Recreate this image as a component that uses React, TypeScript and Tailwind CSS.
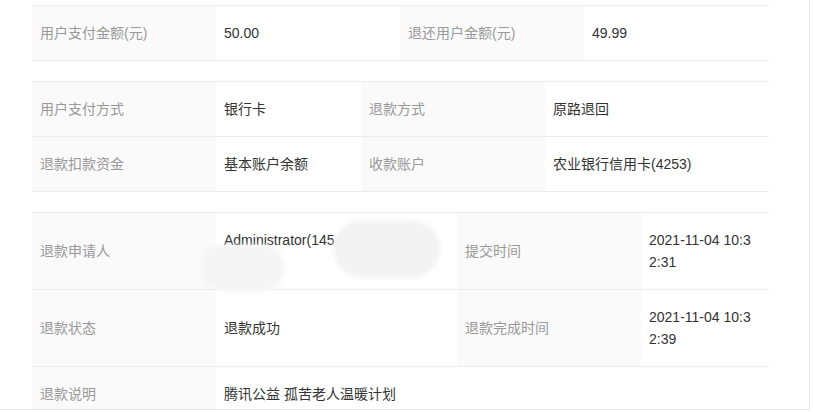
const font = { fontFamily: '"Liberation Sans", "Noto Sans CJK SC", sans-serif' };

function Label({ children }: { children: React.ReactNode }) {
  return (
    <div className="flex items-center bg-[#fafafa] px-2 text-[#999999]">
      {children}
    </div>
  );
}

function Value({ children, className = "" }: { children: React.ReactNode; className?: string }) {
  return (
    <div className={"flex items-center py-4 pl-2 pr-4 text-[#333333] break-all " + className}>
      <div>{children}</div>
    </div>
  );
}

export default function App() {
  return (
    <div style={font} className="h-[410px] w-[810px] overflow-hidden border-r border-b border-[#e8e8e8] bg-white pl-8 pt-[5px] text-[14px] leading-[22px]">
      <div className="w-[737px]">
        {/* amounts */}
        <div className="border-t border-[#ececec]">
          <div className="grid grid-cols-[184px_184px_184px_185px] border-b border-[#ececec]">
            <Label>用户支付金额(元)</Label>
            <Value>50.00</Value>
            <Label>退还用户金额(元)</Label>
            <Value>49.99</Value>
          </div>
        </div>

        {/* payment */}
        <div className="mt-5 border-t border-[#ececec]">
          <div className="grid grid-cols-[184px_145px_184px_224px] border-b border-[#ececec]">
            <Label>用户支付方式</Label>
            <Value>银行卡</Value>
            <Label>退款方式</Label>
            <Value>原路退回</Value>
          </div>
          <div className="grid grid-cols-[184px_145px_184px_224px] border-b border-[#ececec]">
            <Label>退款扣款资金</Label>
            <Value>基本账户余额</Value>
            <Label>收款账户</Label>
            <Value>农业银行信用卡(4253)</Value>
          </div>
        </div>

        {/* applicant */}
        <div className="mt-5 border-t border-[#ececec]">
          <div className="grid grid-cols-[184px_241px_184px_128px] border-b border-[#ececec]">
            <Label>退款申请人</Label>
            <div className="relative py-4 pl-2 pr-4 text-[#333333]">
              <div>Administrator(145</div>
              <div>&nbsp;</div>
              <div className="absolute left-[-16px] top-[32px] h-[46px] w-[85px] rounded-full bg-[#f5f5f5] blur-[2px]" />
              <div className="absolute left-[117px] top-[7px] h-[58px] w-[107px] rounded-full bg-[#f3f3f3] blur-[2px]" />
            </div>
            <Label>提交时间</Label>
            <Value className="items-start">2021-11-04 10:32:31</Value>
          </div>
          <div className="grid grid-cols-[184px_241px_184px_128px] border-b border-[#ececec]">
            <Label>退款状态</Label>
            <Value>退款成功</Value>
            <Label>退款完成时间</Label>
            <Value>2021-11-04 10:32:39</Value>
          </div>
          <div className="grid grid-cols-[184px_553px] border-b border-[#ececec]">
            <Label>退款说明</Label>
            <Value>腾讯公益 孤苦老人温暖计划</Value>
          </div>
        </div>
      </div>
    </div>
  );
}
